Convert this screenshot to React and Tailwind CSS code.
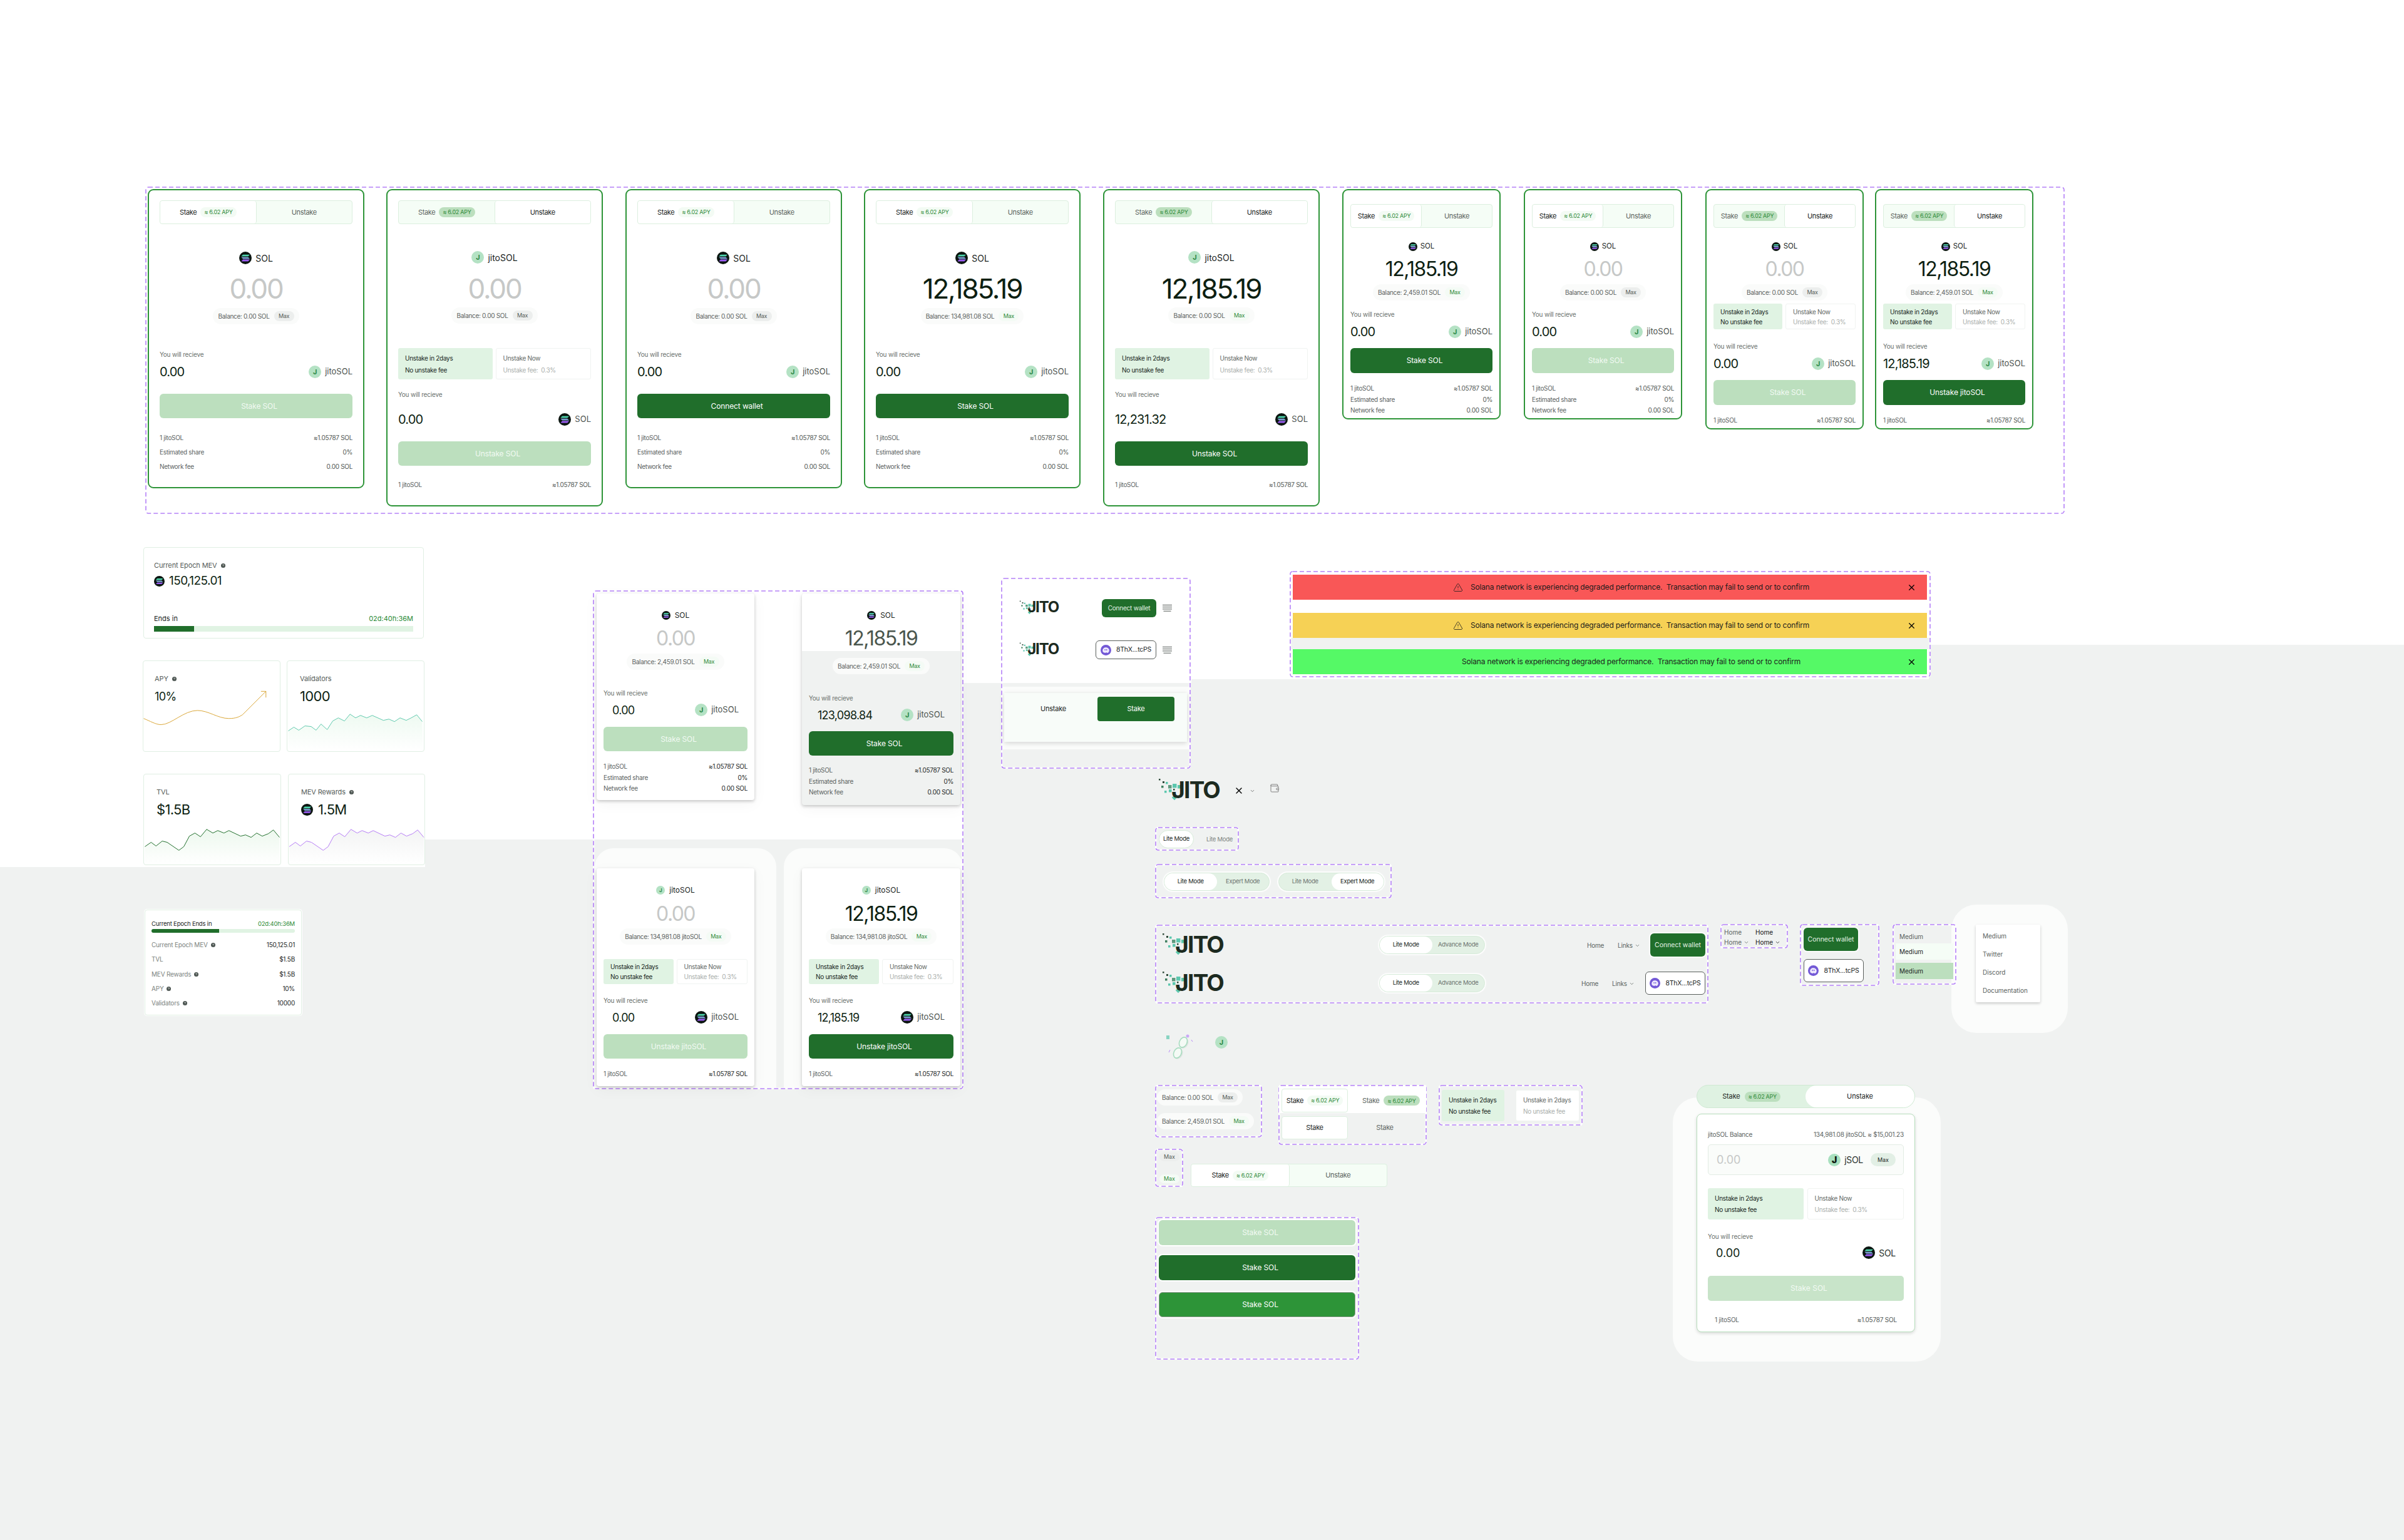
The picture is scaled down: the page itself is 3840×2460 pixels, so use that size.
import React from "react";
import { ChevronDown, TriangleAlert, Wallet, X } from "lucide-react";

const GREEN = "bg-[#206e2b]";
const SOFT = "bg-[#bcdfbe]";

const DashBox = ({ cls }) => (
  <svg className={`absolute ${cls}`} fill="none">
    <rect x="1" y="1" rx="4" className="[width:calc(100%-2px)] [height:calc(100%-2px)]" stroke="#ffffff" strokeWidth="3" />
    <rect x="1" y="1" rx="4" className="[width:calc(100%-2px)] [height:calc(100%-2px)]" stroke="#b581f8" strokeWidth="1.6" strokeDasharray="7 4" />
  </svg>
);

const SolIcon = ({ cls }) => (
  <svg viewBox="0 0 20 20" className={`shrink-0 ${cls}`}>
    <circle cx="10" cy="10" r="10" fill="#0b1510" />
    <polygon points="6,4.8 17,4.8 14.4,7.6 3.4,7.6" fill="#4fd6ad" />
    <polygon points="3.4,8.7 14.4,8.7 17,11.5 6,11.5" fill="#7c9fd4" />
    <polygon points="6,12.6 17,12.6 14.4,15.4 3.4,15.4" fill="#9b5cf2" />
  </svg>
);

const JIcon = ({ cls }) => (
  <div className={`shrink-0 flex items-center justify-center rounded-full bg-[#b4e2c4] text-[#2f8a48] font-bold ${cls}`}>J</div>
);

const Phantom = ({ cls }) => (
  <svg viewBox="0 0 20 20" className={`shrink-0 ${cls}`}>
    <circle cx="10" cy="10" r="10" fill="#7359d6" />
    <path d="M3.8 11c0-3.6 2.6-6 6-6 3.4 0 6.4 2.4 6.4 5.6 0 3-2.2 4.6-3.6 4.6-.8 0-1-.7-1.8-.7s-1.1.7-2 .7C6 15.2 3.8 14 3.8 11z" fill="#efeafd" />
    <ellipse cx="8.4" cy="9.4" rx=".9" ry="1.4" fill="#7359d6" />
    <ellipse cx="11.4" cy="9.4" rx=".9" ry="1.4" fill="#7359d6" />
  </svg>
);

const Help = () => (
  <svg viewBox="0 0 10 10" className="w-[7px] h-[7px] shrink-0">
    <circle cx="5" cy="5" r="5" fill="#4b5450" />
    <path d="M3.6 4c.1-1.7 2.9-1.6 2.9 0 0 1-1.5 1-1.5 2M5 7.4v.4" stroke="#fff" strokeWidth="1" fill="none" />
  </svg>
);

const Hamburger = ({ cls }) => (
  <svg viewBox="0 0 15 11" className={`absolute ${cls}`} stroke="#3c4440" strokeWidth=".9">
    <path d="M0 .5h15M0 3.7h15M0 6.9h15M1.5 10.2h12" />
  </svg>
);

const Logo = ({ cls, small }) => (
  <div className={`absolute ${cls} ${small ? "w-[64px] h-[23px]" : "w-[97px] h-[37px]"}`}>
    <svg viewBox="0 0 97 37" className="absolute inset-0 w-full h-full">
      <rect x="0" y="1" width="2.5" height="2.5" fill="#2f4a3a" />
      <rect x="6" y="5" width="3" height="3" fill="#2f4a3a" />
      <rect x="11" y="6" width="3.5" height="3.5" fill="#5cc7ae" />
      <rect x="4" y="12" width="3.5" height="3.5" fill="#3f7f5f" />
      <rect x="15" y="11" width="5.5" height="5.5" fill="#5f9a7e" />
      <rect x="22" y="9" width="6.5" height="6.5" fill="#5cc7ae" />
      <rect x="30" y="11" width="5.5" height="5.5" fill="#5cc7ae" />
      <rect x="9" y="20" width="3.5" height="3.5" fill="#5cc7ae" />
      <rect x="16" y="18" width="4.5" height="4.5" fill="#5cc7ae" />
      <rect x="23" y="17" width="2.5" height="2.5" fill="#2f4a3a" />
      <rect x="22" y="28" width="6" height="6" fill="#5cc7ae" transform="rotate(45 25 31)" />
    </svg>
    <span className={`absolute right-0 bottom-0 font-bold text-[#1c2a20] leading-none ${small ? "text-[24px] tracking-[-0.05em]" : "text-[37px] tracking-[-0.05em]"}`}>JITO</span>
  </div>
);

const Chip = ({ dark }) => (
  <span className={`inline-flex items-center justify-center whitespace-nowrap h-[16px] px-[6px] rounded-full text-[9px] tracking-[-0.03em] text-[#2d8a38] ${dark ? "bg-[#bcdfbe]" : "bg-[#f3fbf4]"}`}>≈ 6.02 APY</span>
);

const Tabs = ({ cls, active = "stake", chipDark }) => (
  <div className={`flex rounded-[4px] border border-[#dcefdf] bg-[#f5fdf6] text-[11px] tracking-[-0.03em] ${cls}`}>
    <div className={`flex-1 flex items-center justify-center gap-[6px] rounded-[4px] ${active === "stake" ? "bg-white border-r border-[#dcefdf] text-[#1a241d]" : "text-[#5c6460]"}`}>
      Stake <Chip dark={chipDark} />
    </div>
    <div className={`flex-1 flex items-center justify-center rounded-[4px] ${active === "unstake" ? "bg-white border-l border-[#dcefdf] text-[#1a241d]" : "text-[#5c6460]"}`}>Unstake</div>
  </div>
);

const Balance = ({ text, funds, cls = "" }) => (
  <div className={`inline-flex items-center gap-[7px] h-[26px] px-[8px] rounded-full bg-[#fafbfa] text-[10px] tracking-[-0.03em] text-[#5a625e] whitespace-nowrap ${cls}`}>
    {text}
    <span className={`flex items-center justify-center w-[32px] h-[16px] rounded-full text-[9px] ${funds ? "bg-[#f4fbf5] text-[#2d8a38]" : "bg-[#eceeed] text-[#555c58]"}`}>Max</span>
  </div>
);

const Options = ({ cls, gap = "gap-[5px]", leading = "gap-[8px]", b1 = "Unstake Now", b2 = "Unstake fee:  0.3%" }) => (
  <div className={`flex text-[10px] tracking-[-0.03em] whitespace-pre ${gap} ${cls}`}>
    <div className={`flex-1 flex flex-col justify-center px-[11px] rounded-[3px] bg-[#e0f3e3] text-[#16241a] ${leading}`}>
      <span className="leading-none">Unstake in 2days</span>
      <span className="leading-none">No unstake fee</span>
    </div>
    <div className={`flex-1 flex flex-col justify-center px-[11px] rounded-[3px] bg-white border border-[#f0f3f1] ${leading}`}>
      <span className="leading-none text-[#5f6763]">{b1}</span>
      <span className="leading-none text-[#a9aeab]">{b2}</span>
    </div>
  </div>
);

const Btn = ({ cls, kind = "off", text }) => {
  const tone = kind === "off" ? SOFT : kind === "on" ? GREEN : "bg-[#2d9438]";
  return (
    <div className={`flex items-center justify-center rounded-[6px] text-[12px] tracking-[-0.01em] ${kind === "off" ? "text-[#f2faf3]" : "text-white"} ${tone} ${cls}`}>
      <span className="pl-[10px]">{text}</span>
    </div>
  );
};

const SIZE = {
  lg: { token: "text-[14px] gap-[6px]", icon: "w-[20px] h-[20px] text-[11px]", amount: "h-[56px] text-[44px]", btn: "h-[39px]", row: "h-[23px]", value: "text-[20px]", right: "text-[13px] gap-[6px] text-[#4b524e]", ricon: "w-[20px] h-[20px] text-[11px]" },
  sm: { token: "text-[11.5px] gap-[5px]", icon: "w-[14px] h-[14px] text-[8px]", amount: "h-[40px] text-[32px]", btn: "h-[40px]", row: "h-[17.5px]", value: "text-[20px]", right: "text-[13px] gap-[6px] text-[#4b524e]", ricon: "w-[20px] h-[20px] text-[11px]" },
  md: { token: "text-[12px] gap-[7px]", icon: "w-[14px] h-[14px] text-[8px]", amount: "h-[40px] text-[32px]", btn: "h-[39px]", row: "h-[17.5px]", value: "text-[18px] pl-[14px]", right: "text-[13px] gap-[6px] pr-[14px] text-[#4b524e]", ricon: "w-[20px] h-[20px] text-[11px]" },
};

const GAP = {
  lg: { top: "pt-[16px]", token: "mt-[44px]", amount: "mt-[11px]", balance: "mt-[3px]", recv: "mt-[41px]", value: "mt-[9px]", btn: "mt-[23px]", rows: "mt-[20px]" },
  lgOpt: { top: "pt-[16px]", token: "mt-[43px]", amount: "mt-[12px]", balance: "mt-[2px]", options: "mt-[39px] h-[50px]", recv: "mt-[17px]", value: "mt-[21px]", btn: "mt-[23px]", rows: "mt-[19px]" },
  sm: { top: "pt-[22px]", token: "mt-[20px]", amount: "mt-[6px]", balance: "mt-[4px]", recv: "mt-[15px]", value: "mt-[9px]", btn: "mt-[14px]", rows: "mt-[16px]" },
  smOpt: { top: "pt-[22px]", token: "mt-[20px]", amount: "mt-[6px]", balance: "mt-[4px]", options: "mt-[5px] h-[41px]", recv: "mt-[20px]", value: "mt-[9px]", btn: "mt-[14px]", rows: "mt-[16px]" },
  md: { top: "pt-0", token: "mt-[25px]", amount: "mt-[7px]", balance: "mt-[4px]", recv: "mt-[30px]", value: "mt-[8px]", btn: "mt-[15px]", rows: "mt-[16px]" },
  mdLow: { top: "pt-0", token: "mt-[25px]", amount: "mt-[7px]", balance: "mt-[11px]", recv: "mt-[31px]", value: "mt-[8px]", btn: "mt-[14px]", rows: "mt-[15px]" },
  mdOpt: { top: "pt-0", token: "mt-[25px]", amount: "mt-[8px]", balance: "mt-[3px]", options: "mt-[23px] h-[40px]", recv: "mt-[19px]", value: "mt-[8px]", btn: "mt-[15px]", rows: "mt-[16px]" },
};

const RATE = ["1 jitoSOL", "≈1.05787 SOL"];
const FULL = [RATE, ["Estimated share", "0%"], ["Network fee", "0.00 SOL"]];

const Token = ({ sol, text, icon }) => (
  <>
    {sol ? <SolIcon cls={icon} /> : <JIcon cls={icon} />}
    <span>{text}</span>
  </>
);

const Swap = ({ cls, size, gap, frame, tabs, tokenSol = true, tokenText = "SOL", amount = "0.00", amountCls, balance, funds, options, value = "0.00", rightSol, rightText = "jitoSOL", btn, on, rows = FULL, pad = "px-[17px]", rowInk = "text-[#4f5653]" }) => {
  const s = SIZE[size];
  const g = GAP[gap];
  const zero = amount === "0.00";
  return (
    <div className={`absolute flex flex-col ${pad} ${g.top} ${frame} ${cls}`}>
      {tabs && <Tabs cls="h-[38px] shrink-0" active={tabs.active} chipDark={tabs.active === "unstake"} />}
      <div className={`flex items-center justify-center h-[20px] shrink-0 text-[#1a241d] ${s.token} ${g.token}`}>
        <Token sol={tokenSol} text={tokenText} icon={s.icon} />
      </div>
      <div className={`flex items-center justify-center shrink-0 tracking-[-0.05em] ${zero ? "text-[#c6c8c7]" : amountCls || "text-[#0d1f12]"} ${s.amount} ${g.amount}`}>{amount}</div>
      <div className={`flex justify-center shrink-0 ${g.balance}`}>
        <Balance text={balance} funds={funds} />
      </div>
      {options && <Options cls={`shrink-0 ${g.options}`} leading={size === "lg" ? "gap-[9px]" : "gap-[6px]"} />}
      <div className={`h-[14px] shrink-0 flex items-center text-[10px] tracking-[-0.02em] text-[#6a716d] ${g.recv}`}>You will recieve</div>
      <div className={`flex items-center justify-between h-[24px] shrink-0 ${g.value}`}>
        <span className={`tracking-[-0.04em] text-[#0d1f12] ${s.value}`}>{value}</span>
        <div className={`flex items-center ${s.right}`}>
          <Token sol={rightSol} text={rightText} icon={s.ricon} />
        </div>
      </div>
      <Btn cls={`shrink-0 ${s.btn} ${g.btn}`} kind={on ? "on" : "off"} text={btn} />
      <div className={`flex flex-col shrink-0 ${g.rows}`}>
        {rows.map(([l, r]) => (
          <div key={l} className={`flex items-center justify-between text-[10px] tracking-[-0.03em] ${s.row}`}>
            <span className="text-[#5b625f]">{l}</span>
            <span className={rowInk}>{r}</span>
          </div>
        ))}
      </div>
    </div>
  );
};

const OUTLINE = "bg-white border-[2px] border-[#2d9438] rounded-[9px]";
const RAISED = "bg-white rounded-[4px] shadow-[0_2px_5px_rgba(0,0,0,0.22),0_6px_24px_rgba(0,0,0,0.04)]";

const Curve = ({ pts, color, fill }) => {
  const d = pts.map(([x, y], i) => `${i ? "L" : "M"}${x} ${y}`).join(" ");
  const id = `g${color.slice(1)}`;
  return (
    <svg viewBox="0 0 220 146" className="absolute inset-0 w-full h-full" fill="none">
      <defs>
        <linearGradient id={id} x1="0" y1="0" x2="0" y2="1">
          <stop offset="0" stopColor={fill} />
          <stop offset="1" stopColor="#ffffff" />
        </linearGradient>
      </defs>
      <path d={`${d} L219 145 L1 145 Z`} fill={`url(#${id})`} />
      <path d={d} stroke={color} strokeWidth="1" strokeLinejoin="round" />
    </svg>
  );
};

const VALIDATORS = [[1,113],[10,107],[18,112],[28,105],[38,106],[46,112],[54,102],[64,111],[73,97],[82,92],[92,97],[101,86],[110,92],[118,88],[128,92],[137,88],[155,96],[164,94],[173,98],[182,92],[192,96],[200,92],[209,87],[218,98]];
const TVL = [[1,117],[11,110],[19,116],[29,108],[37,110],[56,123],[64,117],[73,100],[82,95],[91,101],[101,89],[111,95],[119,91],[129,95],[137,91],[156,100],[164,98],[173,102],[182,95],[191,100],[201,96],[209,90],[219,102]];

const Stat = ({ cls, label, help, value, sol, valueCls = "text-[22px]", children, left = "pl-[18px]" }) => (
  <div className={`absolute overflow-hidden bg-white border border-[#e0efe3] rounded-[4px] ${cls}`}>
    {children}
    <div className={`relative flex flex-col pt-[21px] ${left}`}>
      <div className="flex items-center gap-[6px] h-[14px] text-[11px] tracking-[-0.01em] text-[#565d5a]">{label}{help && <Help />}</div>
      <div className={`flex items-center gap-[8px] h-[30px] mt-[6px] tracking-[-0.03em] text-[#0d1f12] ${valueCls}`}>
        {sol && <SolIcon cls="w-[19px] h-[19px]" />}
        {value}
      </div>
    </div>
  </div>
);

const Mode = ({ cls, left = "Lite Mode", right, active = "left" }) => (
  <div className={`absolute flex rounded-full bg-[#e3f1e5] border border-[#d6ebd9] ring-2 ring-white/80 text-[9.5px] tracking-[-0.03em] ${cls}`}>
    <div className={`flex-1 flex items-center justify-center rounded-full ${active === "left" ? "bg-white text-[#16241a]" : "text-[#6b726e]"}`}>{left}</div>
    <div className={`flex-1 flex items-center justify-center rounded-full ${active === "right" ? "bg-white text-[#16241a]" : "text-[#6b726e]"}`}>{right}</div>
  </div>
);

const Connect = ({ cls, text = "text-[10.5px]" }) => (
  <div className={`absolute flex items-center justify-center rounded-[6px] ${GREEN} text-[#e6f4e8] ring-2 ring-white/70 ${text} ${cls}`}>Connect wallet</div>
);

const Addr = ({ cls }) => (
  <div className={`absolute flex items-center justify-center gap-[8px] rounded-[6px] bg-white border border-[#5a5f5c] text-[10.5px] tracking-[-0.02em] text-[#1a241d] ${cls}`}>
    <Phantom cls="w-[17px] h-[17px]" />
    8ThX...tcPS
  </div>
);

const NavLinks = ({ cls, home, links }) => (
  <>
    <span className={`absolute text-[10px] tracking-[-0.02em] text-[#5a625e] leading-none ${home} ${cls}`}>Home</span>
    <span className={`absolute flex items-center gap-[3px] text-[10px] tracking-[-0.02em] text-[#5a625e] leading-none ${links} ${cls}`}>
      Links <ChevronDown className="w-[9px] h-[9px]" />
    </span>
  </>
);

const Alert = ({ cls, icon }) => (
  <div className={`absolute left-[2065px] w-[1013px] h-[40px] flex items-center text-[12px] tracking-[-0.015em] text-[#1c1c1c] ${cls}`}>
    {icon && <TriangleAlert className="absolute left-[256px] w-[16px] h-[17px]" strokeWidth={1.2} />}
    <span className={`absolute whitespace-pre ${icon ? "left-[284px]" : "left-[270px]"}`}>Solana network is experiencing degraded performance.  Transaction may fail to send or to confirm</span>
    <X className="absolute left-[981px] w-[15px] h-[15px] text-black" strokeWidth={2} />
  </div>
);

const EpochRow = ({ label, help, value }) => (
  <div className="flex items-center justify-between h-[23.3px] text-[10px] tracking-[-0.02em]">
    <span className="flex items-center gap-[5px] text-[#7c8380]">{label}{help && <Help />}</span>
    <span className="text-[#1a241d]">{value}</span>
  </div>
);

const Bar = ({ cls, fill }) => (
  <div className={`bg-[#e0f3e3] ${cls}`}>
    <div className={`h-full ${GREEN} ${fill}`} />
  </div>
);

const Coins = ({ cls }) => (
  <svg viewBox="0 0 46 41" className={`absolute ${cls}`} fill="none">
    <rect x="0" y="2" width="5" height="6" fill="#5cc7ae" opacity=".7" />
    <circle cx="34" cy="3" r="2.5" fill="#c9a9f7" />
    <ellipse cx="28" cy="14" rx="7" ry="9" transform="rotate(25 28 14)" fill="#dde3df" />
    <ellipse cx="27" cy="13" rx="6" ry="8.5" transform="rotate(25 27 13)" fill="#f4faf5" stroke="#a8dcc0" strokeWidth="1.6" />
    <ellipse cx="19" cy="31" rx="7" ry="9" transform="rotate(25 19 31)" fill="#dde3df" />
    <ellipse cx="18" cy="30" rx="6" ry="8.5" transform="rotate(25 18 30)" fill="#f4faf5" stroke="#a8dcc0" strokeWidth="1.6" />
    <path d="M40 9l2 3M6 25l-2 4" stroke="#b88cf8" strokeWidth="1" />
  </svg>
);

export default function App() {
  return (
    <div className="relative w-[3840px] h-[2460px] overflow-hidden bg-[#f0f2f1] font-[Inter,sans-serif]">
      {/* white part of the board, it steps down from right to left */}
      <div className="absolute left-0 top-0 w-[679px] h-[1385px] bg-white" />
      <div className="absolute left-[679px] top-0 w-[859px] h-[1341px] bg-white" />
      <div className="absolute left-[1538px] top-0 w-[365px] h-[1091px] bg-white" />
      <div className="absolute left-[1903px] top-0 w-[1178px] h-[1085px] bg-white" />
      <div className="absolute left-[3081px] top-0 w-[759px] h-[1030px] bg-white" />
      <div className="absolute left-[2062px] top-[1019px] w-[1020px] h-[18px] bg-[#f0f2f1]" />

      {/* soft halos left by the shadows */}
      <div className="absolute left-[950px] top-[1355px] w-[290px] h-[385px] rounded-t-[30px] bg-[#fbfcfb]" />
      <div className="absolute left-[1252px] top-[1355px] w-[286px] h-[385px] rounded-t-[30px] bg-[#fbfcfb]" />
      <div className="absolute left-[1599px] top-[1097px] w-[302px] h-[100px] bg-[#fbfcfb]" />
      <div className="absolute left-[3117px] top-[1445px] w-[186px] h-[205px] rounded-[40px] bg-[#fbfcfb]" />
      <div className="absolute left-[2672px] top-[1753px] w-[428px] h-[422px] rounded-[40px] bg-[#fbfcfb]" />

      {/* swap cards, top row */}
      <DashBox cls="left-[232px] top-[298px] w-[3066px] h-[523px]" />
      <Swap cls="left-[236px] top-[302px] w-[346px] h-[478px]" size="lg" gap="lg" frame={OUTLINE} tabs={{ active: "stake" }} balance="Balance: 0.00 SOL" btn="Stake SOL" />
      <Swap cls="left-[617px] top-[302px] w-[346px] h-[507px]" size="lg" gap="lgOpt" frame={OUTLINE} tabs={{ active: "unstake" }} tokenSol={false} tokenText="jitoSOL" balance="Balance: 0.00 SOL" options rightSol rightText="SOL" btn="Unstake SOL" rows={[RATE]} />
      <Swap cls="left-[999px] top-[302px] w-[346px] h-[478px]" size="lg" gap="lg" frame={OUTLINE} tabs={{ active: "stake" }} balance="Balance: 0.00 SOL" btn="Connect wallet" on />
      <Swap cls="left-[1380px] top-[302px] w-[346px] h-[478px]" size="lg" gap="lg" frame={OUTLINE} tabs={{ active: "stake" }} amount="12,185.19" balance="Balance: 134,981.08 SOL" funds btn="Stake SOL" on />
      <Swap cls="left-[1762px] top-[302px] w-[346px] h-[507px]" size="lg" gap="lgOpt" frame={OUTLINE} tabs={{ active: "unstake" }} tokenSol={false} tokenText="jitoSOL" amount="12,185.19" balance="Balance: 0.00 SOL" funds options value="12,231.32" rightSol rightText="SOL" btn="Unstake SOL" on rows={[RATE]} />
      <Swap cls="left-[2144px] top-[302px] w-[253px] h-[368px]" size="sm" gap="sm" pad="px-[11px]" frame={OUTLINE} tabs={{ active: "stake" }} amount="12,185.19" balance="Balance: 2,459.01 SOL" funds btn="Stake SOL" on />
      <Swap cls="left-[2434px] top-[302px] w-[253px] h-[368px]" size="sm" gap="sm" pad="px-[11px]" frame={OUTLINE} tabs={{ active: "stake" }} balance="Balance: 0.00 SOL" btn="Stake SOL" />
      <Swap cls="left-[2724px] top-[302px] w-[253px] h-[384px]" size="sm" gap="smOpt" pad="px-[11px]" frame={OUTLINE} tabs={{ active: "unstake" }} balance="Balance: 0.00 SOL" options btn="Stake SOL" rows={[RATE]} />
      <Swap cls="left-[2995px] top-[302px] w-[253px] h-[384px]" size="sm" gap="smOpt" pad="px-[11px]" frame={OUTLINE} tabs={{ active: "unstake" }} amount="12,185.19" balance="Balance: 2,459.01 SOL" funds options value="12,185.19" btn="Unstake jitoSOL" on rows={[RATE]} />

      {/* epoch stats */}
      <div className="absolute left-[229px] top-[874px] w-[448px] h-[146px] flex flex-col px-[16px] pt-[21px] bg-white border border-[#e0efe3] rounded-[4px]">
        <div className="flex items-center gap-[6px] h-[14px] text-[11px] tracking-[-0.01em] text-[#565d5a]">Current Epoch MEV <Help /></div>
        <div className="flex items-center gap-[7px] h-[26px] mt-[5px] text-[19px] tracking-[-0.03em] text-[#0d1f12]">
          <SolIcon cls="w-[17px] h-[17px]" /> 150,125.01
        </div>
        <div className="flex items-center justify-between h-[14px] mt-[40px] text-[11px]">
          <span className="text-[#1a241d]">Ends in</span>
          <span className="text-[#2a8a35]">02d:40h:36M</span>
        </div>
        <Bar cls="h-[9px] mt-[5px]" fill="w-[64px]" />
      </div>

      <Stat cls="left-[228px] top-[1055px] w-[220px] h-[146px]" label="APY" help value="10%" valueCls="text-[18px]">
        <svg viewBox="0 0 220 146" className="absolute inset-0 w-full h-full" fill="none" stroke="#d9a636" strokeWidth="1">
          <path d="M0 93C10 97 20 103 28 103C45 103 65 80 87 80C105 80 120 93 138 93C150 93 155 90 160 87L198 49M190 49H198V59" />
        </svg>
      </Stat>
      <Stat cls="left-[458px] top-[1055px] w-[220px] h-[146px]" label="Validators" value="1000" left="pl-[20px]">
        <Curve pts={VALIDATORS} color="#5ec8ad" fill="#eefaf1" />
      </Stat>
      <Stat cls="left-[229px] top-[1236px] w-[220px] h-[146px]" label="TVL" value="$1.5B" left="pl-[20px]">
        <Curve pts={TVL} color="#206e2b" fill="#edf8ee" />
      </Stat>
      <Stat cls="left-[460px] top-[1236px] w-[219px] h-[146px]" label="MEV Rewards" help value="1.5M" sol left="pl-[20px]">
        <Curve pts={TVL} color="#b57bf5" fill="#f3f4f4" />
      </Stat>

      <div className="absolute left-[231px] top-[1453px] w-[251px] h-[169px] flex flex-col px-[10px] pt-[16px] bg-white border border-[#e0efe3] rounded-[4px] ring-1 ring-white">
        <div className="flex items-center justify-between h-[12px] text-[9.5px] tracking-[-0.02em]">
          <span className="text-[#1a241d]">Current Epoch Ends in</span>
          <span className="text-[#2a8a35]">02d:40h:36M</span>
        </div>
        <Bar cls="h-[6px] mt-[2px] rounded-full overflow-hidden" fill="w-[108px]" />
        <div className="flex flex-col mt-[8px]">
          <EpochRow label="Current Epoch MEV" help value="150,125.01" />
          <EpochRow label="TVL" value="$1.5B" />
          <EpochRow label="MEV Rewards" help value="$1.5B" />
          <EpochRow label="APY" help value="10%" />
          <EpochRow label="Validators" help value="10000" />
        </div>
      </div>

      {/* swap cards with shadow */}
      <DashBox cls="left-[947px] top-[943px] w-[592px] h-[797px]" />
      <Swap cls="left-[953px] top-[948px] w-[252px] h-[330px]" size="md" gap="md" pad="px-[11px]" frame={RAISED} balance="Balance: 2,459.01 SOL" funds btn="Stake SOL" rowInk="text-[#1a241d]" />
      <Swap cls="left-[1281px] top-[948px] w-[253px] h-[338px] bg-[linear-gradient(#fff_92px,#f0f2f1_92px)]" size="md" gap="mdLow" pad="px-[11px]" frame={RAISED} amount="12,185.19" amountCls="text-[#4a564d]" balance="Balance: 2,459.01 SOL" funds value="123,098.84" btn="Stake SOL" on rowInk="text-[#1a241d]" />
      <Swap cls="left-[953px] top-[1387px] w-[252px] h-[348px]" size="md" gap="mdOpt" pad="px-[11px]" frame={RAISED} tokenSol={false} tokenText="jitoSOL" balance="Balance: 134,981.08 jitoSOL" funds options rightSol btn="Unstake jitoSOL" rows={[RATE]} rowInk="text-[#1a241d]" />
      <Swap cls="left-[1281px] top-[1387px] w-[253px] h-[348px]" size="md" gap="mdOpt" pad="px-[11px]" frame={RAISED} tokenSol={false} tokenText="jitoSOL" amount="12,185.19" balance="Balance: 134,981.08 jitoSOL" funds options value="12,185.19" rightSol btn="Unstake jitoSOL" on rows={[RATE]} rowInk="text-[#1a241d]" />

      {/* mobile header */}
      <DashBox cls="left-[1599px] top-[923px] w-[303px] h-[305px]" />
      <Logo small cls="left-[1627px] top-[959px]" />
      <Connect cls="left-[1760px] top-[957px] w-[87px] h-[29px]" text="text-[10px] tracking-[-0.02em]" />
      <Hamburger cls="left-[1857px] top-[966px] w-[15px] h-[11px]" />
      <Logo small cls="left-[1627px] top-[1026px]" />
      <Addr cls="left-[1750px] top-[1023px] w-[97px] h-[30px]" />
      <Hamburger cls="left-[1857px] top-[1033px] w-[15px] h-[11px]" />
      <div className="absolute left-[1604px] top-[1107px] w-[292px] h-[78px] flex items-start pt-[6px] pl-[32px] gap-[24px] bg-[#f8fcf9] shadow-[0_2px_8px_rgba(0,0,0,0.16)] text-[11px] tracking-[-0.02em]">
        <span className="flex-1 h-[39px] flex items-center justify-center text-[#1a241d]">Unstake</span>
        <span className={`w-[123px] h-[39px] mr-[20px] flex items-center justify-center rounded-[4px] text-white ${GREEN}`}>Stake</span>
      </div>

      {/* alerts */}
      <DashBox cls="left-[2060px] top-[912px] w-[1024px] h-[170px]" />
      <Alert cls="top-[918px] bg-[#f95757]" icon />
      <Alert cls="top-[979px] bg-[#f6d155]" icon />
      <Alert cls="top-[1037px] bg-[#55f966]" />

      {/* logo, partner mark, wallet */}
      <Logo cls="left-[1851px] top-[1243px]" />
      <X className="absolute left-[1971px] top-[1255px] w-[16px] h-[16px] text-black" strokeWidth={2} />
      <ChevronDown className="absolute left-[1996px] top-[1259px] w-[9px] h-[9px] text-[#555]" />
      <Wallet className="absolute left-[2028px] top-[1251px] w-[16px] h-[16px] text-[#666]" strokeWidth={1.2} />

      {/* mode toggles */}
      <DashBox cls="left-[1845px] top-[1321px] w-[134px] h-[38px]" />
      <div className="absolute left-[1851px] top-[1326px] w-[56px] h-[29px] flex items-center justify-center rounded-full bg-white border border-[#d6ebd9] text-[9.5px] tracking-[-0.03em] text-[#16241a]">Lite Mode</div>
      <span className="absolute left-[1927px] top-[1334px] text-[9.5px] tracking-[-0.03em] text-[#7b827e]">Lite Mode</span>
      <DashBox cls="left-[1845px] top-[1380px] w-[378px] h-[55px]" />
      <Mode cls="left-[1859px] top-[1394px] w-[169px] h-[29px]" right="Expert Mode" />
      <Mode cls="left-[2042px] top-[1394px] w-[169px] h-[29px]" right="Expert Mode" active="right" />

      {/* desktop header */}
      <DashBox cls="left-[1845px] top-[1477px] w-[884px] h-[126px]" />
      <Logo cls="left-[1857px] top-[1490px]" />
      <Mode cls="left-[2203px] top-[1495px] w-[169px] h-[29px]" right="Advance Mode" />
      <NavLinks cls="top-[1505px]" home="left-[2535px]" links="left-[2584px]" />
      <Connect cls="left-[2636px] top-[1491px] w-[88px] h-[37px]" />
      <Logo cls="left-[1857px] top-[1551px]" />
      <Mode cls="left-[2203px] top-[1556px] w-[169px] h-[29px]" right="Advance Mode" />
      <NavLinks cls="top-[1566px]" home="left-[2526px]" links="left-[2575px]" />
      <Addr cls="left-[2628px] top-[1552px] w-[96px] h-[37px]" />

      {/* nav link states */}
      <DashBox cls="left-[2748px] top-[1476px] w-[108px] h-[39px]" />
      <span className="absolute left-[2754px] top-[1484px] text-[10px] leading-none text-[#5a625e]">Home</span>
      <span className="absolute left-[2804px] top-[1484px] text-[10px] leading-none text-[#111]">Home</span>
      <span className="absolute left-[2754px] top-[1500px] flex items-center gap-[3px] text-[10px] leading-none text-[#5a625e]">Home <ChevronDown className="w-[9px] h-[9px]" /></span>
      <span className="absolute left-[2804px] top-[1500px] flex items-center gap-[3px] text-[10px] leading-none text-[#111]">Home <ChevronDown className="w-[9px] h-[9px]" /></span>

      <DashBox cls="left-[2875px] top-[1476px] w-[127px] h-[99px]" />
      <Connect cls="left-[2881px] top-[1482px] w-[87px] h-[37px]" />
      <Addr cls="left-[2881px] top-[1532px] w-[96px] h-[37px]" />

      {/* menu item states */}
      <DashBox cls="left-[3023px] top-[1476px] w-[102px] h-[97px]" />
      <div className="absolute left-[3028px] top-[1486px] w-[92px] h-[78px] flex flex-col text-[10px] text-[#1a241d]">
        <span className="h-[21px] flex items-center pl-[6px] text-[#5a625e]">Medium</span>
        <span className="h-[26px] flex items-center pl-[6px] bg-[#f5fdf6]">Medium</span>
        <span className="h-[26px] mt-[5px] flex items-center pl-[6px] bg-[#bcdfbe]">Medium</span>
      </div>
      <div className="absolute left-[3156px] top-[1477px] w-[103px] h-[124px] flex flex-col justify-center pl-[11px] gap-[16px] bg-white rounded-[2px] shadow-[0_2px_4px_rgba(0,0,0,0.2)] text-[10px] leading-[13px] text-[#5a625e]">
        <span>Medium</span>
        <span>Twitter</span>
        <span>Discord</span>
        <span>Documentation</span>
      </div>

      {/* illustration and token */}
      <Coins cls="left-[1863px] top-[1652px] w-[46px] h-[41px]" />
      <JIcon cls="absolute left-[1941px] top-[1655px] w-[20px] h-[20px] text-[11px]" />

      {/* small parts */}
      <DashBox cls="left-[1845px] top-[1733px] w-[171px] h-[84px]" />
      <Balance text="Balance: 0.00 SOL" cls="absolute left-[1848px] top-[1740px]" />
      <Balance text="Balance: 2,459.01 SOL" funds cls="absolute left-[1848px] top-[1778px]" />

      <DashBox cls="left-[2042px] top-[1733px] w-[237px] h-[96px]" />
      <div className="absolute left-[2043px] top-[1735px] w-[235px] h-[43px] bg-white" />
      <div className="absolute left-[2047px] top-[1739px] w-[106px] h-[38px] flex items-center justify-center gap-[6px] rounded-[4px] bg-white border border-[#dcefdf] text-[11px] tracking-[-0.03em] text-[#1a241d]">Stake <Chip /></div>
      <div className="absolute left-[2176px] top-[1750px] flex items-center gap-[7px] text-[11px] tracking-[-0.03em] text-[#5c6460]">Stake <Chip dark /></div>
      <div className="absolute left-[2047px] top-[1783px] w-[106px] h-[37px] flex items-center justify-center rounded-[4px] bg-white border border-[#dcefdf] text-[11px] tracking-[-0.03em] text-[#1a241d]">Stake</div>
      <div className="absolute left-[2159px] top-[1783px] w-[106px] h-[37px] flex items-center justify-center text-[11px] tracking-[-0.03em] text-[#5c6460]">Stake</div>

      <DashBox cls="left-[2298px] top-[1733px] w-[230px] h-[65px]" />
      <Options cls="absolute left-[2303px] top-[1741px] w-[220px] h-[50px]" gap="gap-[18px]" b1="Unstake in 2days" b2="No unstake fee" />

      <DashBox cls="left-[1845px] top-[1835px] w-[45px] h-[61px]" />
      <span className="absolute left-[1852px] top-[1841px] w-[32px] h-[14px] flex items-center justify-center rounded-full bg-[#eceeed] text-[9px] text-[#555c58]">Max</span>
      <span className="absolute left-[1852px] top-[1876px] w-[32px] h-[14px] flex items-center justify-center rounded-full bg-[#f4fbf5] text-[9px] text-[#2d8a38]">Max</span>
      <Tabs cls="absolute left-[1902px] top-[1859px] w-[314px] h-[37px]" active="stake" />

      {/* button states */}
      <DashBox cls="left-[1845px] top-[1944px] w-[326px] h-[228px]" />
      <Btn cls="absolute left-[1851px] top-[1949px] w-[314px] h-[40px] ring-2 ring-white" kind="off" text="Stake SOL" />
      <Btn cls="absolute left-[1851px] top-[2005px] w-[314px] h-[40px] ring-2 ring-white" kind="on" text="Stake SOL" />
      <Btn cls="absolute left-[1851px] top-[2064px] w-[314px] h-[40px] ring-2 ring-white border border-[#8e9a90]" kind="hover" text="Stake SOL" />

      {/* stake widget */}
      <div className="absolute left-[2710px] top-[1733px] w-[349px] h-[37px] flex rounded-full bg-[#dff2e2] border border-[#cfe9d3] text-[11px] tracking-[-0.01em]">
        <div className="flex-1 flex items-center justify-center gap-[7px] text-[#1a241d]">Stake <Chip dark /></div>
        <div className="w-[174px] flex items-center justify-center rounded-full bg-white text-[#1a241d]">Unstake</div>
      </div>
      <div className="absolute left-[2710px] top-[1779px] w-[349px] h-[349px] flex flex-col px-[17px] bg-white border border-[#b8dfbd] rounded-[8px] shadow-[0_2px_5px_rgba(0,0,0,0.14)]">
        <div className="flex items-center justify-between h-[14px] mt-[25px] text-[10px] tracking-[-0.02em] text-[#5a625e]">
          <span>jitoSOL Balance</span>
          <span>134,981.08 jitoSOL ≈ $15,001.23</span>
        </div>
        <div className="flex items-center h-[49px] mt-[9px] pl-[13px] pr-[12px] bg-[#fafcfa] border border-[#e2ece4] rounded-[5px]">
          <span className="flex-1 text-[18px] text-[#c6c8c7]">0.00</span>
          <div className="w-[20px] h-[20px] flex items-center justify-center rounded-full bg-[#a8e0bf] text-[14px] font-black text-[#101a12]">J</div>
          <span className="ml-[6px] text-[14px] tracking-[-0.02em] text-[#2a322d]">jSOL</span>
          <span className="ml-[12px] w-[40px] h-[21px] flex items-center justify-center rounded-full bg-[#e2efe5] text-[9px] text-[#1a241d]">Max</span>
        </div>
        <Options cls="h-[50px] mt-[21px] text-[10.5px]" gap="gap-[6px]" leading="gap-[8px]" />
        <div className="h-[14px] flex items-center mt-[20px] text-[10px] tracking-[-0.01em] text-[#6a716d]">You will recieve</div>
        <div className="flex items-center h-[24px] mt-[7px] px-[13px]">
          <span className="flex-1 text-[18px] text-[#0d1f12]">0.00</span>
          <SolIcon cls="w-[20px] h-[20px]" />
          <span className="ml-[6px] text-[14px] tracking-[-0.02em] text-[#2a322d]">SOL</span>
        </div>
        <div className="h-[40px] mt-[25px] flex items-center justify-center rounded-[5px] bg-[#c8e4c9] text-[12px] text-[#f2faf3]"><span className="pl-[10px]">Stake SOL</span></div>
        <div className="flex items-center justify-between h-[14px] mt-[23px] px-[11px] text-[10px] tracking-[-0.02em]">
          <span className="text-[#5b625f]">1 jitoSOL</span>
          <span className="text-[#4f5653]">≈1.05787 SOL</span>
        </div>
      </div>
    </div>
  );
}
